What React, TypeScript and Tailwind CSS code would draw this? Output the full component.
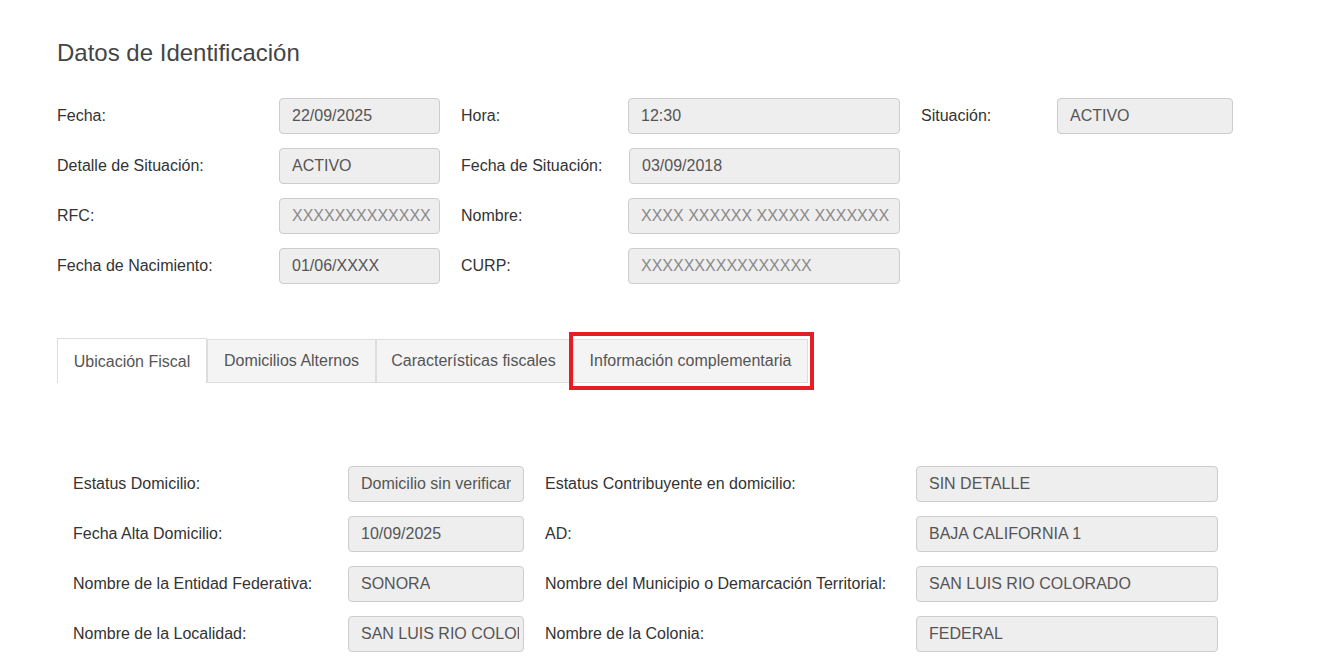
import React from 'react';

const font = { fontFamily: '"Liberation Sans", Arial, Helvetica, sans-serif' };

function Field({ value, className = '', muted = false }: { value: string; className?: string; muted?: boolean }) {
  return (
    <div
      className={`h-[36px] shrink-0 flex items-center pl-[12px] pr-[4px] bg-[#eeeeee] border border-[#cccccc] rounded-[4px] text-[16px] overflow-hidden whitespace-nowrap ${
        muted ? 'text-[#8a8a8a]' : 'text-[#555555]'
      } ${className}`}
    >
      <span className="block min-w-0 overflow-hidden">{value}</span>
    </div>
  );
}

function Label({ text, className = '' }: { text: string; className?: string }) {
  return <div className={`shrink-0 pt-[6px] text-[16px] text-[#333333] whitespace-nowrap ${className}`}>{text}</div>;
}

export default function App() {
  const tabs = [
    { name: 'Ubicación Fiscal', w: 'w-[150px]' },
    { name: 'Domicilios Alternos', w: 'w-[169px]' },
    { name: 'Características fiscales', w: 'w-[195px]' },
    { name: 'Información complementaria', w: 'w-[235px]' },
  ];

  const bottomRows = [
    { l1: 'Estatus Domicilio:', v1: 'Domicilio sin verificar', l2: 'Estatus Contribuyente en domicilio:', v2: 'SIN DETALLE' },
    { l1: 'Fecha Alta Domicilio:', v1: '10/09/2025', l2: 'AD:', v2: 'BAJA CALIFORNIA 1' },
    { l1: 'Nombre de la Entidad Federativa:', v1: 'SONORA', l2: 'Nombre del Municipio o Demarcación Territorial:', v2: 'SAN LUIS RIO COLORADO' },
    { l1: 'Nombre de la Localidad:', v1: 'SAN LUIS RIO COLORADO', l2: 'Nombre de la Colonia:', v2: 'FEDERAL' },
  ];

  return (
    <div className="min-h-screen bg-white pl-[57px] pt-[38px]" style={font}>
      <h1 className="text-[24px] leading-[30px] text-[#444444]">Datos de Identificación</h1>

      {/* Datos generales */}
      <div className="mt-[30px] flex flex-col gap-[14px]">
        <div className="flex">
          <Label text="Fecha:" className="w-[222px]" />
          <Field value="22/09/2025" className="w-[161px]" />
          <Label text="Hora:" className="w-[167px] ml-[21px]" />
          <Field value="12:30" className="w-[272px]" />
          <Label text="Situación:" className="w-[136px] ml-[21px]" />
          <Field value="ACTIVO" className="w-[176px]" />
        </div>
        <div className="flex">
          <Label text="Detalle de Situación:" className="w-[222px]" />
          <Field value="ACTIVO" className="w-[161px]" />
          <Label text="Fecha de Situación:" className="w-[168px] ml-[21px]" />
          <Field value="03/09/2018" className="w-[271px]" />
        </div>
        <div className="flex">
          <Label text="RFC:" className="w-[222px]" />
          <Field value="XXXXXXXXXXXXX" muted className="w-[161px] pl-[7px]" />
          <Label text="Nombre:" className="w-[167px] ml-[21px]" />
          <Field value="XXXX XXXXXX XXXXX XXXXXXX" muted className="w-[272px] pl-[9px]" />
        </div>
        <div className="flex">
          <Label text="Fecha de Nacimiento:" className="w-[222px]" />
          <Field value="01/06/XXXX" className="w-[161px]" />
          <Label text="CURP:" className="w-[167px] ml-[21px]" />
          <Field value="XXXXXXXXXXXXXXXX" muted className="w-[272px] pl-[9px]" />
        </div>
      </div>

      {/* Tabs */}
      <div className="mt-[54px] flex items-end">
        {tabs.map((t, i) => {
          const active = i === 0;
          const highlighted = i === 3;
          return (
            <div
              key={t.name}
              className={`relative ${t.w} flex items-center justify-center text-[16px] text-[#555555] border-t border-l border-r border-[#dddddd] whitespace-nowrap ${
                active ? 'bg-white h-[45px] pt-[1px]' : 'bg-[#f4f4f4] border-b h-[44px]'
              } ${highlighted ? 'ml-[2px]' : ''}`}
            >
              {t.name}
              {highlighted && (
                <div className="absolute left-[-5px] right-[-7px] top-[-8px] bottom-[-8px] border-4 border-[#e31e24] pointer-events-none" />
              )}
            </div>
          );
        })}
      </div>

      {/* Ubicación Fiscal */}
      <div className="mt-[83px] pl-[16px] flex flex-col gap-[14px]">
        {bottomRows.map((r) => (
          <div key={r.l1} className="flex">
            <Label text={r.l1} className="w-[275px] pt-[4px]" />
            <Field value={r.v1} className="w-[176px]" />
            <Label text={r.l2} className="w-[371px] ml-[21px] pt-[4px]" />
            <Field value={r.v2} className="w-[302px]" />
          </div>
        ))}
      </div>
    </div>
  );
}
